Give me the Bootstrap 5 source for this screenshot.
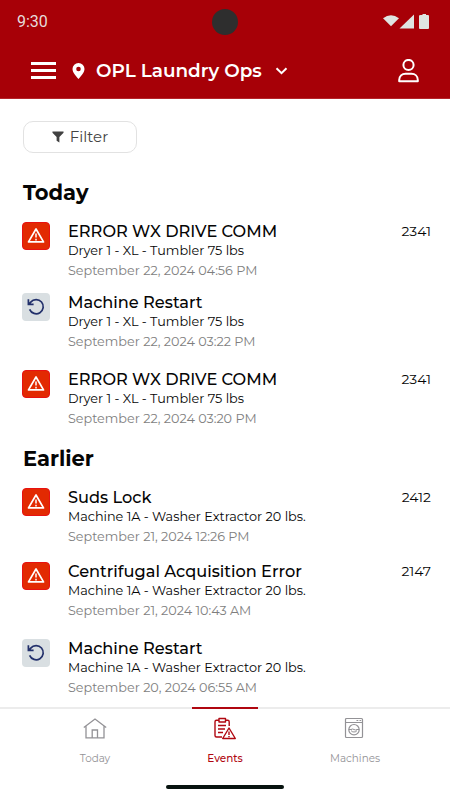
<!DOCTYPE html>
<html lang="en">
<head>
<meta charset="utf-8">
<meta name="viewport" content="width=device-width, initial-scale=1">
<title>OPL Laundry Ops</title>
<link href="https://cdn.jsdelivr.net/npm/bootstrap@5.3.0/dist/css/bootstrap.min.css" rel="stylesheet">
<style>
  body { font-family: Montserrat, Inter, sans-serif; color: #050505; background: #fff; }
  svg { display: block; flex: none; }
  .screen { height: 800px; overflow: hidden; }
  .app-head { height: 99px; background: #a70007; flex: none; border-bottom: 1px solid #b5242a; }
  .status { height: 43px; padding: 0 21px 0 17px; }
  .clock { font: 400 16px/1 Roboto, sans-serif; color: #e6dcdc; padding-top: 1px; }
  .camera { left: 212px; top: 9px; width: 26px; height: 26px; background: #2e2e2e; }
  .app-bar { height: 55px; padding: 0 31px 0 31px; }
  .site { font-size: 18.4px; font-weight: 600; line-height: 24px; margin-left: 11px; }
  .filter-btn { width: 114px; height: 32px; margin: 21.5px 0 0 23px; border: 1px solid #e2e2e2; border-radius: 10px; font-size: 15px; line-height: 20px; color: #444; background: #fff; }
  .filter-btn svg { margin-right: 6px; }
  .group-title { font-size: 21px; font-weight: 700; line-height: 29px; height: 28px; margin: 25.5px 0 0 23px; }
  .event { height: 74px; padding: 0 19px 0 22px; }
  .event-tall { height: 77px; }
  .event-short { height: 71px; }
  .tile { width: 28px; height: 27.5px; border-radius: 4px; margin-right: 18px; flex: none; }
  .tile-error { background: #e22a02; border: 1px solid #e81111; }
  .tile-info { background: #d9dfe2; }
  .ev-name { font-size: 16.2px; font-weight: 500; line-height: 18px; }
  .ev-unit { font-size: 12.8px; line-height: 17px; margin-top: 1.5px; }
  .ev-time { font-size: 12.75px; line-height: 17px; margin-top: 3.5px; color: #7e7e7e; }
  .ev-code { font-size: 13.9px; line-height: 18px; }
  .tabs { height: 93px; background: #fff; border-top: 2px solid #ececec; flex: none; }
  .tab { width: 130px; color: #939296; font-size: 10.4px; line-height: 14px; }
  .tab svg { height: 24px; margin: 8px 0 11px; }
  .tab-on { color: #b00710; font-weight: 500; }
  .tab-on::before { content: ""; width: 66px; height: 2px; margin: -2px auto 0; background: #b00710; }
  .home-bar { width: 118px; height: 4px; background: #07130f; bottom: 11px; left: 166px; }
</style>
<script src="https://cdn.jsdelivr.net/npm/bootstrap@5.3.0/dist/js/bootstrap.bundle.min.js"></script>
</head>
<body>
<svg class="d-none" aria-hidden="true">
  <symbol id="alert" viewBox="0 0 18 16"><path d="M9 1 1.5 13.900H16.5Z" fill="none" stroke="#fff" stroke-width="1.7" stroke-linejoin="round"/><path d="M9 5.400v4.1M9 10.700v1.7" stroke="#fff" stroke-width="1.5"/></symbol>
  <symbol id="restart" viewBox="0 0 18 18"><path d="M1.4 1.2v5.2h5.2M1.8 6.2 3.7 4.1A7.1 7.1 0 1 1 2.6 11.4" fill="none" stroke="#22306b" stroke-width="1.7"/></symbol>
</svg>
<div class="screen d-flex flex-column position-relative">
  <header class="app-head text-white">
    <div class="status d-flex align-items-center justify-content-between">
      <span class="clock">9:30</span>
      <svg width="46" height="16" viewBox="0 0 46 16" fill="#dfe4e1"><path d="M0 4.2Q8 -1.6 16 4.2L8 12.3Z"/><path d="M31 .5V14.500H16.500Z"/><path d="M37.500 1H39.500V0H43V1H45Q46 1 46 2V14Q46 15 45 15H37Q36 15 36 14V2Q36 1 37.500 1Z"/></svg>
    </div>
    <div class="camera rounded-circle position-absolute"></div>
    <div class="app-bar d-flex align-items-center">
      <svg width="25" height="17" viewBox="0 0 25 17" fill="#fff"><path d="M0 0H25V3H0ZM0 7H25V10H0ZM0 14H25V17H0Z"/></svg>
      <svg class="ms-3" width="13" height="16" viewBox="0 0 12 16"><path fill="#fff" fill-rule="evenodd" d="M6 0a6 6 0 0 1 6 6c0 3.500-3.600 7.300-6 10C3.600 13.300 0 9.500 0 6a6 6 0 0 1 6-6Zm0 3.700a2.300 2.300 0 1 0 0 4.600 2.300 2.300 0 0 0 0-4.600Z"/></svg>
      <span class="site">OPL Laundry Ops</span>
      <svg class="ms-2 ps-1" width="19" height="8" viewBox="0 0 15 8"><path d="M2.500 1.300 7.500 6.200 12.500 1.300" fill="none" stroke="#fff" stroke-width="2"/></svg>
      <svg class="ms-auto" width="21" height="24" viewBox="0 0 21 24" fill="none" stroke="#fff" stroke-width="2"><circle cx="10.500" cy="6" r="5.100"/><path d="M1.200 22.200V21C1.200 17.100 4 14.700 7.500 14.700H13.500C17 14.700 19.800 17.100 19.800 21V22.200Z" stroke-linejoin="round"/></svg>
    </div>
  </header>

  <main class="flex-grow-1 overflow-hidden">
    <button class="filter-btn d-flex align-items-center justify-content-center p-0"><svg width="12" height="12" viewBox="0 0 13 13"><path d="M.5.500H12.500V2L8 6.500V12.500L5 10.500V6.500L.5 2Z" fill="#414141"/></svg><span>Filter</span></button>

    <h2 class="group-title">Today</h2>
    <div class="mt-3">
      <div class="event event-short d-flex"><div class="tile tile-error d-flex align-items-center justify-content-center"><svg width="18" height="16"><use href="#alert"/></svg></div><div class="flex-grow-1"><div class="ev-name">ERROR WX DRIVE COMM</div><div class="ev-unit">Dryer 1 - XL - Tumbler 75 lbs</div><div class="ev-time">September 22, 2024 04:56 PM</div></div><div class="ev-code">2341</div></div>
      <div class="event event-tall d-flex"><div class="tile tile-info d-flex align-items-center justify-content-center"><svg width="18" height="18"><use href="#restart"/></svg></div><div class="flex-grow-1"><div class="ev-name">Machine Restart</div><div class="ev-unit">Dryer 1 - XL - Tumbler 75 lbs</div><div class="ev-time">September 22, 2024 03:22 PM</div></div></div>
      <div class="event d-flex"><div class="tile tile-error d-flex align-items-center justify-content-center"><svg width="18" height="16"><use href="#alert"/></svg></div><div class="flex-grow-1"><div class="ev-name">ERROR WX DRIVE COMM</div><div class="ev-unit">Dryer 1 - XL - Tumbler 75 lbs</div><div class="ev-time">September 22, 2024 03:20 PM</div></div><div class="ev-code">2341</div></div>
    </div>

    <h2 class="group-title mt-0">Earlier</h2>
    <div class="mt-3">
      <div class="event d-flex"><div class="tile tile-error d-flex align-items-center justify-content-center"><svg width="18" height="16"><use href="#alert"/></svg></div><div class="flex-grow-1"><div class="ev-name">Suds Lock</div><div class="ev-unit">Machine 1A - Washer Extractor 20 lbs.</div><div class="ev-time">September 21, 2024 12:26 PM</div></div><div class="ev-code">2412</div></div>
      <div class="event event-tall d-flex"><div class="tile tile-error d-flex align-items-center justify-content-center"><svg width="18" height="16"><use href="#alert"/></svg></div><div class="flex-grow-1"><div class="ev-name">Centrifugal Acquisition Error</div><div class="ev-unit">Machine 1A - Washer Extractor 20 lbs.</div><div class="ev-time">September 21, 2024 10:43 AM</div></div><div class="ev-code">2147</div></div>
      <div class="event d-flex"><div class="tile tile-info d-flex align-items-center justify-content-center"><svg width="18" height="18"><use href="#restart"/></svg></div><div class="flex-grow-1"><div class="ev-name">Machine Restart</div><div class="ev-unit">Machine 1A - Washer Extractor 20 lbs.</div><div class="ev-time">September 20, 2024 06:55 AM</div></div></div>
    </div>
  </main>

  <nav class="tabs d-flex justify-content-center">
    <div class="tab d-flex flex-column align-items-center">
      <svg width="24" viewBox="0 0 24 24" fill="none" stroke="currentColor" stroke-width="1.300"><path d="M.8 10.500 12 2 23.200 10.500M3 9V20.800H21V9M9.200 20.500V13H14.500V20.500"/></svg>Today</div>
    <div class="tab tab-on d-flex flex-column align-items-center">
      <svg width="24" viewBox="0 0 24 24" fill="none" stroke="currentColor" stroke-width="1.400"><path d="M6 3.200H3.500Q2 3.200 2 4.700V18.500Q2 20 3.500 20H9M12.500 3.200H14.700Q16.200 3.200 16.200 4.700V9M6 1.500H12.500V5H6ZM5 8.500H13M5 12H12M5 15.500H10M16 11 9.700 21.500H22.300ZM16 14.500V18M16 19V20.200" stroke-linejoin="round"/></svg>Events</div>
    <div class="tab d-flex flex-column align-items-center">
      <svg width="24" viewBox="0 0 24 24" fill="none" stroke="currentColor" stroke-width="1.200"><rect x="2.500" y="1.500" width="17" height="19" rx="1"/><path d="M2.500 5.500H19.500M13.500 3.500H15.300M16.500 3.500H18.200"/><circle cx="11" cy="12.700" r="5.200"/><path d="M5.800 12.500H8.500M8 12.500Q9.500 11.500 11 12.500T14 12.500H16.200M8 13.500Q8.800 15 11 15T14 13.500" stroke-width="1"/></svg>Machines</div>
  </nav>
  <div class="home-bar rounded-pill position-absolute"></div>
</div>
</body>
</html>
